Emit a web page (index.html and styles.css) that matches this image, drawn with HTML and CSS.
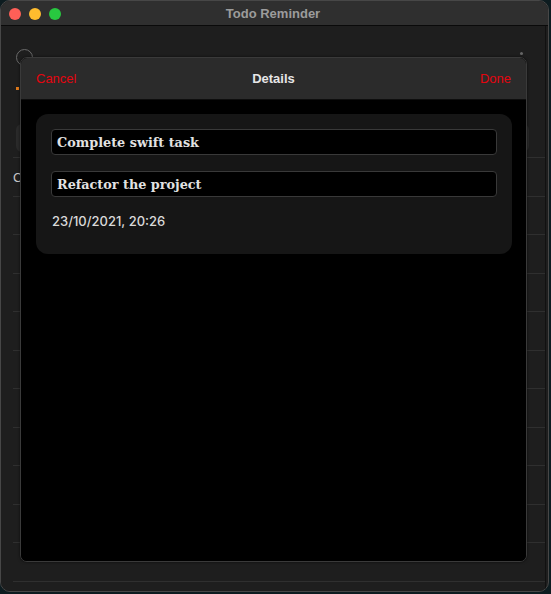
FILE: index.html
```html
<!DOCTYPE html>
<html lang="en">
<head>
<meta charset="utf-8">
<title>Todo Reminder</title>
<link rel="stylesheet" href="styles.css">
</head>
<body>
<div class="window">
  <header class="titlebar">
    <div class="lights">
      <span class="light red"></span>
      <span class="light yellow"></span>
      <span class="light green"></span>
    </div>
    <div class="title">Todo Reminder</div>
  </header>
  <main class="content">
    <div class="backdrop">
      <div class="toolbar">
        <span class="ring"></span>
        <span class="plus"></span>
      </div>
      <div class="marker-row"><span class="marker"></span></div>
      <div class="search"></div>
      <div class="rows">
        <div class="row"><span class="row-text">C</span></div>
        <div class="row"></div>
        <div class="row"></div>
        <div class="row"></div>
        <div class="row"></div>
        <div class="row"></div>
        <div class="row"></div>
        <div class="row"></div>
        <div class="row"></div>
        <div class="row"></div>
        <div class="row"></div>
        <div class="row last"></div>
      </div>
    </div>

    <section class="sheet">
      <div class="sheet-head">
        <button class="link left">Cancel</button>
        <div class="sheet-title">Details</div>
        <button class="link right">Done</button>
      </div>
      <div class="sheet-body">
        <div class="card">
          <div class="field">Complete swift task</div>
          <div class="field">Refactor the project</div>
          <div class="date">23/10/2021, 20:26</div>
        </div>
      </div>
    </section>
  </main>
</div>
</body>
</html>
```

FILE: styles.css
```css
* { box-sizing: border-box; }

html, body {
  margin: 0;
  padding: 0;
  width: 551px;
  height: 594px;
  background: #0d1c20;
  overflow: hidden;
  font-family: "Liberation Sans", Arial, sans-serif;
}

.window {
  width: 549px;
  height: 592px;
  border: 1px solid #474747;
  border-radius: 10px;
  overflow: hidden;
  display: flex;
  flex-direction: column;
  background: #1e1e1e;
}

.titlebar {
  height: 25px;
  flex: none;
  background: #2f2f2f;
  border-bottom: 1px solid #0a0a0a;
  display: flex;
  align-items: center;
  position: relative;
}

.lights {
  display: flex;
  gap: 8px;
  padding-left: 8px;
  padding-top: 1px;
}

.light {
  width: 12px;
  height: 12px;
  border-radius: 50%;
  display: block;
}
.light.red { background: #fe5f57; }
.light.yellow { background: #febc2e; }
.light.green { background: #28c840; }

.title {
  position: absolute;
  left: 0;
  right: 0;
  top: 5px;
  text-align: center;
  font-weight: bold;
  font-size: 13px;
  color: #9c9c9c;
  padding-right: 3px;
}

.content {
  flex: 1;
  position: relative;
  background: #1e1e1e;
  border-right: 1px solid #111;
  margin-right: 2px;
}

.backdrop {
  padding: 0 0 0 12px;
  display: flex;
  flex-direction: column;
}

.toolbar {
  height: 45px;
  display: flex;
  align-items: flex-start;
  justify-content: space-between;
  padding-top: 23px;
  padding-left: 3px;
  padding-right: 22px;
}

.ring {
  width: 17px;
  height: 17px;
  border: 1.5px solid #6a6a6a;
  border-radius: 50%;
}

.plus {
  width: 3px;
  height: 3px;
  margin-top: 3px;
  background: #666;
  border-radius: 50%;
}

.marker-row {
  height: 20px;
  padding-left: 3px;
  padding-top: 16px;
}

.marker {
  display: block;
  width: 3px;
  height: 3px;
  background: #e07a1a;
}

.search {
  margin-top: 33px;
  margin-right: 16px;
  margin-left: 3px;
  height: 28px;
  border-radius: 6px;
  background: #2a2a2a;
}

.rows {
  margin-top: 5px;
  display: flex;
  flex-direction: column;
}

.row {
  height: 38.5px;
  border-top: 1px solid #2f2f2f;
  position: relative;
}
.row.last { height: 12px; }

.row-text {
  display: block;
  padding-top: 12px;
  font-size: 13px;
  color: #c8c8c8;
}

.sheet {
  position: absolute;
  left: 19px;
  top: 31px;
  width: 507px;
  height: 505px;
  border: 1px solid #3a3a3a;
  border-radius: 7px;
  overflow: hidden;
  display: flex;
  flex-direction: column;
  background: #000;
  box-shadow: 0 0 3px rgba(0,0,0,0.6);
}

.sheet-head {
  height: 42px;
  flex: none;
  background: #2b2b2b;
  border-bottom: 1px solid #0e0e0e;
  display: grid;
  grid-template-columns: 1fr auto 1fr;
  align-items: center;
  padding: 0 15px 1px 15px;
}

.link {
  background: none;
  border: 0;
  padding: 0;
  font-family: "Liberation Sans", Arial, sans-serif;
  font-size: 13px;
  color: #e5050f;
}
.link.left { justify-self: start; }
.link.right { justify-self: end; }

.sheet-title {
  font-weight: bold;
  font-size: 13px;
  color: #e6e6e6;
}

.sheet-body {
  flex: 1;
  padding: 14px 14px 0 15px;
  background: #000;
}

.card {
  height: 140px;
  border-radius: 12px;
  background: #161616;
  padding: 15px 15px 0 15px;
  display: flex;
  flex-direction: column;
  gap: 16px;
}

.field {
  height: 26px;
  border: 1px solid #393939;
  border-radius: 4px;
  background: #000;
  padding: 1px 5px 0 5px;
  display: flex;
  align-items: center;
  font-family: "DejaVu Serif", "Liberation Serif", serif;
  font-weight: bold;
  font-size: 12.8px;
  color: #e2e2e2;
}

.date {
  margin-top: 0;
  padding-left: 1px;
  font-family: Inter, "Liberation Sans", sans-serif;
  font-weight: 500;
  font-size: 13px;
  color: #dadada;
  line-height: 16px;
}
```
